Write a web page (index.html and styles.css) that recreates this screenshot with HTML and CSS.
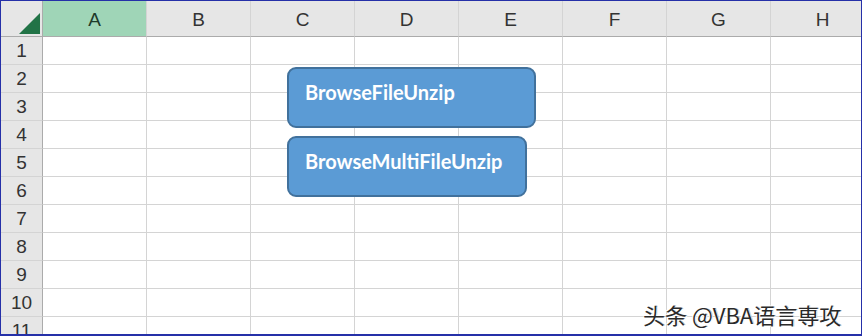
FILE: index.html
```html
<!DOCTYPE html>
<html lang="en">

<head>
    <meta charset="UTF-8">
    <title>Sheet</title>
    <link rel="stylesheet" href="styles.css">
</head>

<body>
    <div class="frame">
        <div class="sheet">
            <div class="corner"><span class="tri"></span></div>
            <div class="col active">A</div>
            <div class="col">B</div>
            <div class="col">C</div>
            <div class="col">D</div>
            <div class="col">E</div>
            <div class="col">F</div>
            <div class="col">G</div>
            <div class="col">H</div>
        </div>
        <div class="btn btn1">BrowseFileUnzip</div>
        <div class="btn btn2">BrowseMultiFileUnzip</div>
        <div class="mark">头条 @VBA语言専攻</div>
    </div>
    <script>
        var sheet = document.querySelector(".sheet");
        for (var r = 1; r <= 11; r++) {
            var h = document.createElement("div");
            h.className = "row";
            h.textContent = r;
            sheet.appendChild(h);
            for (var c = 0; c < 8; c++) {
                var d = document.createElement("div");
                d.className = "cell";
                sheet.appendChild(d);
            }
        }
    </script>
</body>

</html>
```

FILE: styles.css
```css
body {
    margin: 0;
    padding: 0;
    overflow: hidden;
}

.frame {
    width: 862px;
    height: 336px;
    box-sizing: border-box;
    border: 1px solid #2530a8;
    border-bottom-width: 2px;
    position: relative;
    overflow: hidden;
    background: #fff;
}

.sheet {
    display: grid;
    grid-template-columns: 42px repeat(8, 104px);
    grid-template-rows: 36px repeat(11, 28px);
    font-family: "Liberation Sans", Arial, sans-serif;
}

.sheet div {
    box-sizing: border-box;
    border-right: 1px solid #d4d4d4;
    border-bottom: 1px solid #d4d4d4;
}

.corner {
    background: #e6e6e6;
    position: relative;
    border-bottom-color: #ababab !important;
    border-right-color: #ababab !important;
}

.tri {
    position: absolute;
    right: 2px;
    bottom: 2px;
    width: 0;
    height: 0;
    border-left: 21px solid transparent;
    border-bottom: 21px solid #217346;
}

.col {
    background: #e6e6e6;
    color: #333;
    font-size: 19px;
    line-height: 37px;
    text-align: center;
    border-bottom-color: #ababab !important;
}

.col.active {
    background: #9fd5b7;
    color: #1e3a2a;
}

.row {
    background: #e6e6e6;
    color: #333;
    font-size: 19px;
    line-height: 28px;
    text-align: center;
    border-right-color: #ababab !important;
}

.cell {
    background: #fff;
}

.btn {
    position: absolute;
    box-sizing: border-box;
    background: #5b9bd5;
    border: 2px solid #41719c;
    border-radius: 9px;
    color: #fff;
    font-family: Lato, "Open Sans", sans-serif;
    font-weight: bold;
    font-size: 20px;
    padding: 11px 0 0 16px;
}

.btn1 {
    left: 286px;
    top: 66px;
    width: 249px;
    height: 61px;
}

.btn2 {
    left: 286px;
    top: 135px;
    width: 240px;
    height: 61px;
}

.mark {
    position: absolute;
    left: 642px;
    top: 297px;
    font-family: "Noto Sans CJK SC", sans-serif;
    font-size: 22px;
    color: #2a2a2a;
    text-shadow: 1px 1px 0 #fff, -1px -1px 0 #fff, 1px 0 0 #aaa;
    white-space: nowrap;
}
```
